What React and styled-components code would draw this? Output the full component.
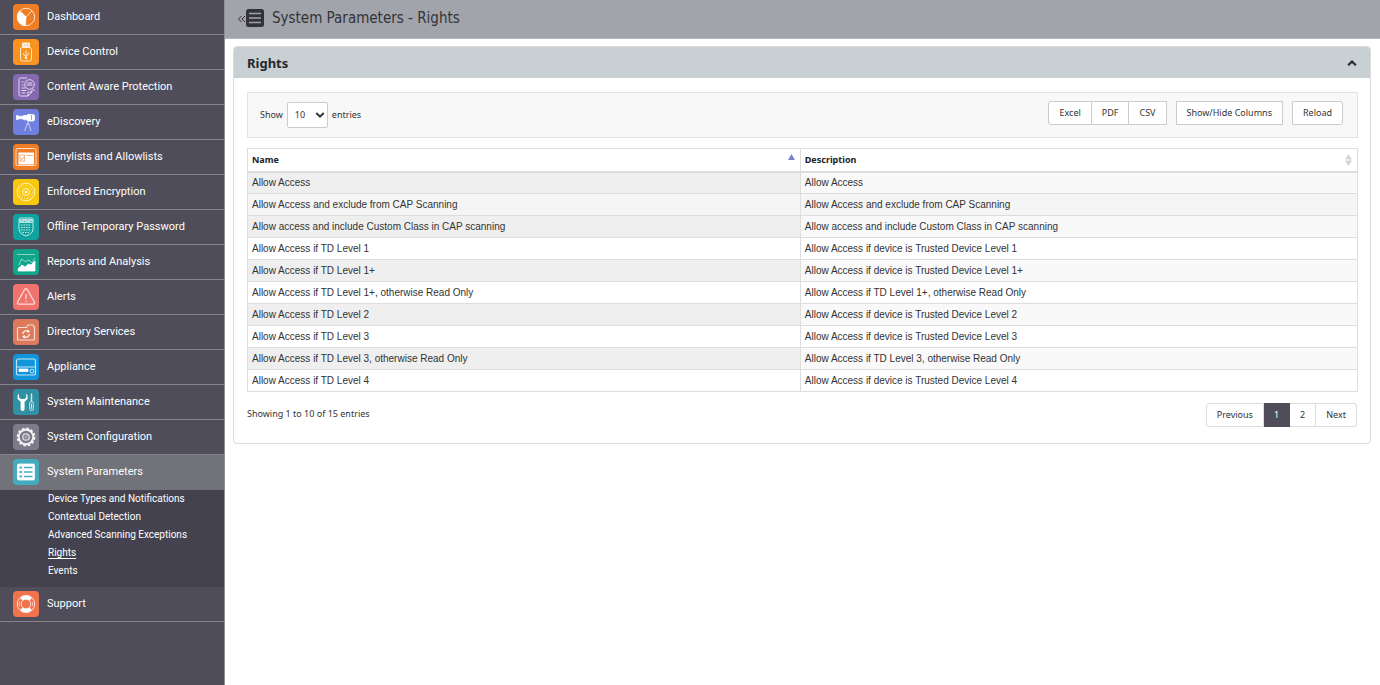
import React, { useState } from "react";
import styled, { createGlobalStyle, css } from "styled-components";

const Global = createGlobalStyle`
  * { box-sizing: border-box; }
  html, body, #root { min-height: 100vh; }
  body {
    margin: 0;
    background: #fff;
    color: #333;
    font: 9px/14px "Noto Sans", sans-serif;
  }
  button, select { font: inherit; color: inherit; }
`;

const Page = styled.div`
  display: flex;
  align-items: stretch;
  min-height: 100vh;
`;

const Sidebar = styled.nav`
  flex: 0 0 225px;
  background: #4e4d59;
  border-right: 1px solid #8e8e98;
  font-family: Roboto, sans-serif;
`;

const MenuList = styled.ul`
  list-style: none;
  margin: 0;
  padding: 0;
`;

const MenuLink = styled.a`
  display: flex;
  align-items: center;
  gap: 8px;
  height: 35px;
  padding: 0 13px;
  border-bottom: 1px solid ${(p) => (p.$active ? "#72727a" : "#85858f")};
  color: #fff;
  font-size: 11px;
  text-decoration: none;
  background: ${(p) => (p.$active ? "#72727a" : "transparent")};
`;

const Tile = styled.svg`
  flex: none;
  width: 26px;
  height: 26px;
  border-radius: 4px;
  background: ${(p) => p.$color};
  fill: none;
  stroke: #fff;
  stroke-opacity: 0.75;
  stroke-width: 1;
`;

const SubMenu = styled.ul`
  list-style: none;
  margin: 0;
  padding: 0 0 7px 48px;
  background: #43424e;
`;

const SubItem = styled.li`
  height: 18px;
  line-height: 18px;
`;

const SubLink = styled.a`
  color: #fff;
  font-size: 10px;
  text-decoration: ${(p) => (p.$current ? "underline" : "none")};
  text-underline-offset: 2px;
`;

const Main = styled.main`
  flex: 1;
  min-width: 0;
`;

const TitleBar = styled.header`
  display: flex;
  align-items: center;
  height: 39px;
  padding: 0 12px 3px;
  background: #a2a4ac;
  border-bottom: 1px solid #b4b6bc;
`;

const CollapseButton = styled.button`
  display: flex;
  align-items: center;
  padding: 0;
  border: 0;
  background: none;
  color: #333338;
`;

const PageTitle = styled.h1`
  margin: 0 0 0 7px;
  font-family: "DejaVu Sans Condensed", "DejaVu Sans", sans-serif;
  font-size: 15px;
  line-height: 20px;
  font-weight: 400;
  color: #333338;
`;

const Panel = styled.section`
  margin: 7px 9px 0 8px;
  border: 1px solid #d9dbdd;
  border-radius: 4px;
  overflow: hidden;
`;

const PanelHeader = styled.div`
  display: flex;
  align-items: center;
  justify-content: space-between;
  height: 31px;
  padding: 0 13px;
  background: #c8d0d4;
`;

const PanelTitle = styled.h2`
  margin: 0;
  font-size: 13px;
  line-height: 18px;
  font-weight: 700;
  color: #26282c;
`;

const IconButton = styled.button`
  display: flex;
  padding: 0;
  border: 0;
  background: none;
  color: #26282c;
`;

const PanelBody = styled.div`
  padding: 14px 12px 16px 13px;
`;

const Toolbar = styled.div`
  display: flex;
  align-items: center;
  justify-content: space-between;
  height: 46px;
  padding: 0 14px 0 12px;
  margin-bottom: 10px;
  background: #f8f8f8;
  border: 1px solid #e2e2e2;
`;

const LengthLabel = styled.label`
  display: flex;
  align-items: center;
  gap: 4px;
`;

const SelectBox = styled.span`
  position: relative;
  display: flex;
  align-items: center;
`;

const LengthSelect = styled.select`
  appearance: none;
  width: 41px;
  height: 26px;
  padding: 0 7px;
  background: #fff;
  border: 1px solid #ccc;
  border-radius: 2px;
`;

const SelectArrow = styled.svg`
  position: absolute;
  right: 3px;
  pointer-events: none;
`;

const ButtonRow = styled.div`
  display: flex;
  gap: 9px;
  padding-bottom: 4px;
`;

const ButtonGroup = styled.div`
  display: flex;
`;

const segment = css`
  height: 24px;
  padding: 0 10px;
  background: #fff;
  border: 1px solid ${(p) => p.$line || "#ccc"};
  & + & { border-left: 0; }
`;

const ToolButton = styled.button`
  ${segment}
  ${(p) => p.$start && "border-radius: 3px 0 0 3px;"}
  ${(p) => p.$end && "border-radius: 0 3px 3px 0;"}
`;

const Table = styled.table`
  width: 100%;
  table-layout: fixed;
  border-collapse: collapse;
  border: 1px solid #ddd;
`;

const HeadCell = styled.th`
  width: ${(p) => p.$width};
  height: 23px;
  padding: 0 4px;
  text-align: left;
  font-weight: 700;
  color: #222;
  border: 1px solid #ddd;
  border-bottom: 2px solid #ddd;
`;

const HeadContent = styled.span`
  display: flex;
  align-items: center;
  justify-content: space-between;
`;

const Row = styled.tr`
  background: ${(p) => p.$bg};
`;

const Cell = styled.td`
  height: 22px;
  padding: 0 4px;
  font-family: "Liberation Sans", Arial, sans-serif;
  font-size: 10px;
  border: 1px solid #ddd;
  background: ${(p) => p.$bg};
`;

const Footer = styled.div`
  display: flex;
  align-items: flex-start;
  justify-content: space-between;
  padding-top: 11px;
`;

const Info = styled.p`
  margin: 4px 0 0;
`;

const Pager = styled.div`
  display: flex;
  padding-right: 1px;
`;

const PageButton = styled.button`
  ${segment}
  ${(p) => p.$start && "border-radius: 3px 0 0 3px;"}
  ${(p) => p.$end && "border-radius: 0 3px 3px 0;"}
  ${(p) => p.$current && "background: #4e4d59; border-color: #4e4d59; color: #fff;"}
`;

const menu = [
  { label: "Dashboard", color: "#ee7d26", art: (
    <>
      <circle cx="13" cy="13" r="8.700" />
      <path d="M13 13 6.600 7.200A8.700 8.700 0 0 0 12.400 21.700Z" fill="#fff" />
      <path d="M13 13 19 6.800M13 13 7 6.600" />
    </>) },
  { label: "Device Control", color: "#f7931e", art: (
    <>
      <path d="M9.500 8.500V4h7v4.500" fill="#fff" fillOpacity=".8" />
      <path d="M11.500 6h1M14 6h1" stroke="#f7931e" />
      <rect x="7.500" y="8.500" width="11" height="13.500" rx="2" />
      <path d="M13 11.500v8M10.700 14v2l2.300 1.600M15.300 13.500v2L13 17" />
      <circle cx="13" cy="19" r=".8" fill="#fff" />
    </>) },
  { label: "Content Aware Protection", color: "#8468b0", art: (
    <>
      <path d="M14 4H7.500a1.500 1.500 0 0 0-1.500 1.500v15A1.500 1.500 0 0 0 7.500 22H15l4-4v-2M15 22v-4h4" />
      <circle cx="16.500" cy="10.500" r="4.800" />
      <path d="M19.500 14.500 21.500 17M14 9h5M13.500 11h6M8.500 8h2M8.500 11h2M8.500 14h4M8.500 16.500h5M8.500 19h4" />
    </>) },
  { label: "eDiscovery", color: "#6f7fe0", art: (
    <>
      <path d="M3.500 6.500h1.500v4H3.500zM5 7.300h5.500v2.500H5zM10.500 6.500h4v4.300h-4z" fill="#fff" />
      <path d="M14.500 5.500h5.500a1.500 1.500 0 0 1 1.500 1.500v3.500A1.500 1.500 0 0 1 20 12h-5.500z" fill="#fff" />
      <path d="M18.500 6v5" stroke="#6f7fe0" />
      <path d="M15 12v4M14.500 14 11.500 22M15.500 14l2.500 8" strokeOpacity=".6" />
    </>) },
  { label: "Denylists and Allowlists", color: "#ee7d26", art: (
    <>
      <rect x="3" y="4.500" width="20" height="17" rx="1.500" />
      <path d="M5.500 8.500h15.500v12H5.500z" fill="#fff" stroke="none" />
      <path d="M7 11h4.500v6H7zM13.500 11.500H20" stroke="#ee7d26" strokeWidth=".8" strokeOpacity=".7" />
      <path d="m8 14 1 1.500 2-3" stroke="#ee7d26" strokeWidth=".8" />
    </>) },
  { label: "Enforced Encryption", color: "#f9c80e", art: (
    <>
      <circle cx="13" cy="13" r="8.800" />
      <circle cx="13" cy="13" r="6.500" strokeDasharray="1 1.200" />
      <circle cx="13" cy="13" r="3.500" />
      <circle cx="13" cy="13" r="1" fill="#fff" />
    </>) },
  { label: "Offline Temporary Password", color: "#0fa3a0", art: (
    <>
      <path d="M6 5.500Q6 4 7.500 4h11Q20 4 20 5.500V15q0 3.500-3.500 5.500L13 22l-3.500-1.500Q6 18.500 6 15z" />
      <path d="M6.500 5h13v4h-13z" fill="#fff" fillOpacity=".7" stroke="none" />
      <path d="M8 6h1.500M11 7.500h1.500M14 6h1M17 7.500h1.500" stroke="#0fa3a0" />
      <path d="M8 11h10M8 13.500h10M8 16h10M9.500 18.500h7" strokeDasharray="1.500 1" />
    </>) },
  { label: "Reports and Analysis", color: "#0fa68c", art: (
    <>
      <path d="M4 5.500h18" strokeOpacity=".5" />
      <path d="m6 16 2.500-6 4 2.500 3.500-1.500 3 3 3-5" strokeOpacity=".55" />
      <path d="m5 22 .500-3 3.500-3 3 2 3.500-3 2.500 1 4-4v10z" fill="#fff" />
    </>) },
  { label: "Alerts", color: "#f0746c", art: (
    <>
      <path d="M11.700 5.500 4.600 18a1.500 1.500 0 0 0 1.300 2.200h14.200a1.500 1.500 0 0 0 1.300-2.200L14.300 5.500a1.500 1.500 0 0 0-2.600 0z" strokeWidth="1.300" />
      <path d="M13 10v5M13 16.700v1.300" strokeWidth="1.300" />
    </>) },
  { label: "Directory Services", color: "#dd7a5c", art: (
    <>
      <path d="M4.500 9.500a1 1 0 0 1 1-1h8l1.500-2.500h5l1.500 2.500v11.500a1 1 0 0 1-1 1h-15a1 1 0 0 1-1-1z" strokeWidth="1.200" />
      <path d="M9.800 15a3.300 3.300 0 0 1 5-2.800M16.400 15a3.300 3.300 0 0 1-5 2.800" strokeWidth="1.600" />
      <path d="M14 10.500l3 1.500-2.300 2.200zM12.200 19.500l-3-1.500 2.300-2.200z" fill="#fff" stroke="none" />
    </>) },
  { label: "Appliance", color: "#1296db", art: (
    <>
      <path d="M3.500 14V7a2 2 0 0 1 2-2h15a2 2 0 0 1 2 2v12.500a1.500 1.500 0 0 1-1.500 1.500H5a1.500 1.500 0 0 1-1.500-1.500zM3.500 13h19" strokeWidth="1.200" />
      <path d="M6 15h9v2.500H6z" fill="#fff" />
      <circle cx="19" cy="17.200" r="1.900" />
    </>) },
  { label: "System Maintenance", color: "#3191a4", art: (
    <>
      <path d="M6 4.500 4.600 6.500v3.500l3 2.700V20a2 2 0 0 0 4 0v-7.300l3-2.700V6.500L13.200 4.500v4l-1.800 1.500H7.800L6 8.500z" fill="#fff" stroke="none" />
      <path d="M18.500 4.500v8" strokeWidth="1.500" />
      <rect x="16.700" y="12.500" width="3.600" height="9" rx="1.700" />
      <path d="M18.500 14.500v5.500" />
    </>) },
  { label: "System Configuration", color: "#7c7b8c", art: (
    <>
      <circle cx="13" cy="13" r="8.500" strokeWidth="1.800" strokeDasharray="2.700 1.750" strokeOpacity=".9" />
      <circle cx="13" cy="13" r="7.200" strokeWidth="1.900" strokeOpacity=".9" />
      <circle cx="13" cy="13" r="3.200" strokeWidth="1.300" />
      <circle cx="13" cy="13" r="1.200" strokeOpacity=".4" />
    </>) },
  { label: "System Parameters", color: "#45acc0", active: true, art: (
    <>
      <rect x="4.500" y="5" width="17" height="16" rx="1" fill="#fff" />
      <path d="M6.500 8.500H9M6.500 13H9M6.500 17.500H9" stroke="#45acc0" strokeWidth="2" strokeOpacity="1" />
      <path d="M11 8.500h8.500M11 13h8.500M11 17.500h8.500" stroke="#45acc0" strokeWidth="1.300" strokeOpacity="1" />
    </>),
    children: ["Device Types and Notifications", "Contextual Detection", "Advanced Scanning Exceptions", "Rights", "Events"] },
  { label: "Support", color: "#f0734e", art: (
    <>
      <circle cx="13" cy="13" r="8.700" />
      <circle cx="13" cy="13" r="4.800" />
      <path d="M8.300 8.300a6.700 6.700 0 0 1 9.400 0M8.300 17.700a6.700 6.700 0 0 0 9.400 0" strokeWidth="3.600" strokeOpacity="1" />
      <path d="M6.500 11a6.700 6.700 0 0 0 0 4M19.500 11a6.700 6.700 0 0 1 0 4" strokeOpacity=".6" />
    </>) },
];

const rights = [
  ["Allow Access", "Allow Access"],
  ["Allow Access and exclude from CAP Scanning", "Allow Access and exclude from CAP Scanning"],
  ["Allow access and include Custom Class in CAP scanning", "Allow access and include Custom Class in CAP scanning"],
  ["Allow Access if TD Level 1", "Allow Access if device is Trusted Device Level 1"],
  ["Allow Access if TD Level 1+", "Allow Access if device is Trusted Device Level 1+"],
  ["Allow Access if TD Level 1+, otherwise Read Only", "Allow Access if TD Level 1+, otherwise Read Only"],
  ["Allow Access if TD Level 2", "Allow Access if device is Trusted Device Level 2"],
  ["Allow Access if TD Level 3", "Allow Access if device is Trusted Device Level 3"],
  ["Allow Access if TD Level 3, otherwise Read Only", "Allow Access if TD Level 3, otherwise Read Only"],
  ["Allow Access if TD Level 4", "Allow Access if device is Trusted Device Level 4"],
];

const HOVERED_ROW = 1;

function rowColours(i) {
  if (i === HOVERED_ROW) return ["#f5f5f5", "#f5f5f5"];
  return i % 2 === 0 ? ["#efefef", "#f9f9f9"] : ["#fff", "#fff"];
}

export default function App() {
  const [length, setLength] = useState("10");
  return (
    <>
      <Global />
      <Page>
        <Sidebar aria-label="Main menu">
          <MenuList>
            {menu.map((item) => (
              <li key={item.label}>
                <MenuLink href="#" $active={item.active}>
                  <Tile viewBox="0 0 26 26" $color={item.color} aria-hidden="true">{item.art}</Tile>
                  {item.label}
                </MenuLink>
                {item.children && (
                  <SubMenu>
                    {item.children.map((c) => (
                      <SubItem key={c}>
                        <SubLink href="#" $current={c === "Rights"}>{c}</SubLink>
                      </SubItem>
                    ))}
                  </SubMenu>
                )}
              </li>
            ))}
          </MenuList>
        </Sidebar>
        <Main>
          <TitleBar>
            <CollapseButton aria-label="Collapse menu">
              <svg width="28" height="18" viewBox="0 0 28 18" fill="none" stroke="currentColor" aria-hidden="true">
                <path d="M4.500 7 1.500 10l3 3M8 7l-3 3 3 3" strokeWidth="1" />
                <rect x="9" y="0" width="18" height="18" rx="2.500" fill="currentColor" stroke="none" />
                <path d="M12 4.500h12M12 9h12M12 13.500h12" stroke="#a2a4ac" strokeWidth="1.500" />
              </svg>
            </CollapseButton>
            <PageTitle>System Parameters - Rights</PageTitle>
          </TitleBar>
          <Panel>
            <PanelHeader>
              <PanelTitle>Rights</PanelTitle>
              <IconButton aria-label="Collapse panel">
                <svg width="10" height="8" viewBox="0 0 10 8" fill="none" stroke="currentColor" strokeWidth="2.200" aria-hidden="true">
                  <path d="M1.200 6.200 5 2.500l3.800 3.700" />
                </svg>
              </IconButton>
            </PanelHeader>
            <PanelBody>
              <Toolbar>
                <LengthLabel>
                  Show
                  <SelectBox>
                    <LengthSelect value={length} onChange={(e) => setLength(e.target.value)}>
                      <option>10</option>
                      <option>25</option>
                      <option>50</option>
                    </LengthSelect>
                    <SelectArrow width="10" height="8" viewBox="0 0 10 8" fill="none" stroke="#333" strokeWidth="2" aria-hidden="true">
                      <path d="M1.300 2 5 5.700 8.700 2" />
                    </SelectArrow>
                  </SelectBox>
                  entries
                </LengthLabel>
                <ButtonRow>
                  <ButtonGroup>
                    <ToolButton $start>Excel</ToolButton>
                    <ToolButton>PDF</ToolButton>
                    <ToolButton>CSV</ToolButton>
                  </ButtonGroup>
                  <ButtonGroup>
                    <ToolButton>Show/Hide Columns</ToolButton>
                  </ButtonGroup>
                  <ButtonGroup>
                    <ToolButton $end>Reload</ToolButton>
                  </ButtonGroup>
                </ButtonRow>
              </Toolbar>
              <Table>
                <thead>
                  <tr>
                    <HeadCell $width="49.800%" scope="col" aria-sort="ascending">
                      <HeadContent>
                        Name
                        <svg width="9" height="14" viewBox="0 0 9 14" aria-hidden="true">
                          <path d="M4.500 1 8 7H1z" fill="#7d7fd0" />
                        </svg>
                      </HeadContent>
                    </HeadCell>
                    <HeadCell scope="col">
                      <HeadContent>
                        Description
                        <svg width="9" height="14" viewBox="0 0 9 14" aria-hidden="true">
                          <path d="M4.500 1 8 6.500H1zM4.500 13 8 7.500H1z" fill="#d6d6d6" />
                        </svg>
                      </HeadContent>
                    </HeadCell>
                  </tr>
                </thead>
                <tbody>
                  {rights.map(([name, description], i) => {
                    const [first, rest] = rowColours(i);
                    return (
                      <Row key={name} $bg={rest}>
                        <Cell $bg={first}>{name}</Cell>
                        <Cell>{description}</Cell>
                      </Row>
                    );
                  })}
                </tbody>
              </Table>
              <Footer>
                <Info>Showing 1 to 10 of 15 entries</Info>
                <Pager>
                  <PageButton $line="#ddd" $start>Previous</PageButton>
                  <PageButton $line="#ddd" $current aria-current="page">1</PageButton>
                  <PageButton $line="#ddd">2</PageButton>
                  <PageButton $line="#ddd" $end>Next</PageButton>
                </Pager>
              </Footer>
            </PanelBody>
          </Panel>
        </Main>
      </Page>
    </>
  );
}
